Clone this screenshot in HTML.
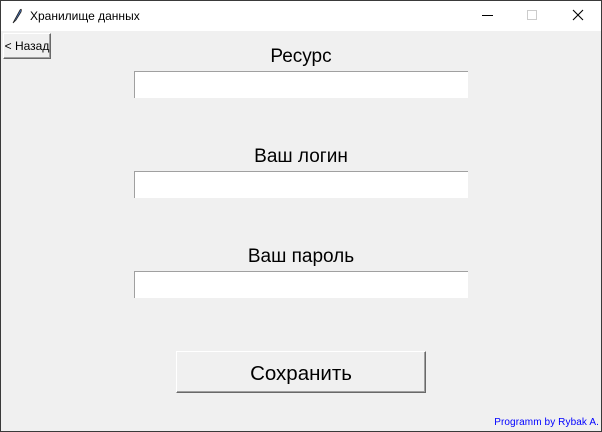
<!DOCTYPE html>
<html><head><meta charset="utf-8"><style>
*{margin:0;padding:0;box-sizing:border-box}
body{width:602px;height:432px;overflow:hidden;background:#f0f0f0;font-family:"Liberation Sans",sans-serif;position:relative}
.frame{position:absolute;left:0;top:0;width:602px;height:432px;border:1px solid #3a3a3a;pointer-events:none}
.title{position:absolute;left:0;top:0;width:602px;height:31px;background:#fff}
.title span{position:absolute;left:30px;top:9px;font-size:12px;color:#000}
.lbl{position:absolute;left:0;width:602px;text-align:center;font-size:19px;color:#000}
.ent{position:absolute;left:134px;width:334px;height:27px;background:#fff;border-top:1px solid #a0a0a0;border-left:1px solid #a0a0a0}
.back{position:absolute;left:3px;top:33px;width:48px;height:26px;border:1px solid #fff;border-right-color:#696969;border-bottom-color:#696969;background:#f0f0f0;font-size:12px;line-height:24px;text-align:center;box-shadow:inset -1px -1px #a0a0a0}
.save{position:absolute;left:176px;top:351px;width:250px;height:42px;border:1px solid #fff;border-right-color:#696969;border-bottom-color:#696969;box-shadow:inset -1px -1px #a0a0a0;font-size:20.5px;text-align:center;line-height:43px}
.by{position:absolute;right:3px;top:417px;font-size:10px;color:#0000ff;letter-spacing:0.1px}
</style></head><body>
<div class="title">
<svg style="position:absolute;left:11px;top:8px" width="12" height="16" viewBox="0 0 12 16"><path d="M2 15 L9 2 Q11 0 10 4 L5 12 Z" fill="#4a78c0" stroke="#222" stroke-width="0.8"/></svg>
<span>Хранилище данных</span>
<div style="position:absolute;left:482px;top:15px;width:11px;height:1px;background:#000"></div>
<div style="position:absolute;left:527px;top:10px;width:10px;height:10px;border:1px solid #ccc"></div>
<svg style="position:absolute;left:572px;top:9px" width="12" height="12"><path d="M1 1 L11 11 M11 1 L1 11" stroke="#000" stroke-width="1.1"/></svg>
</div>
<div class="back">&lt; Назад</div>
<div class="lbl" style="top:46px">Ресурс</div>
<div class="ent" style="top:71px"></div>
<div class="lbl" style="top:146px">Ваш логин</div>
<div class="ent" style="top:171px"></div>
<div class="lbl" style="top:246px">Ваш пароль</div>
<div class="ent" style="top:271px"></div>
<div class="save">Сохранить</div>
<div class="by">Programm by Rybak A.</div>
<div class="frame"></div>
</body></html>
